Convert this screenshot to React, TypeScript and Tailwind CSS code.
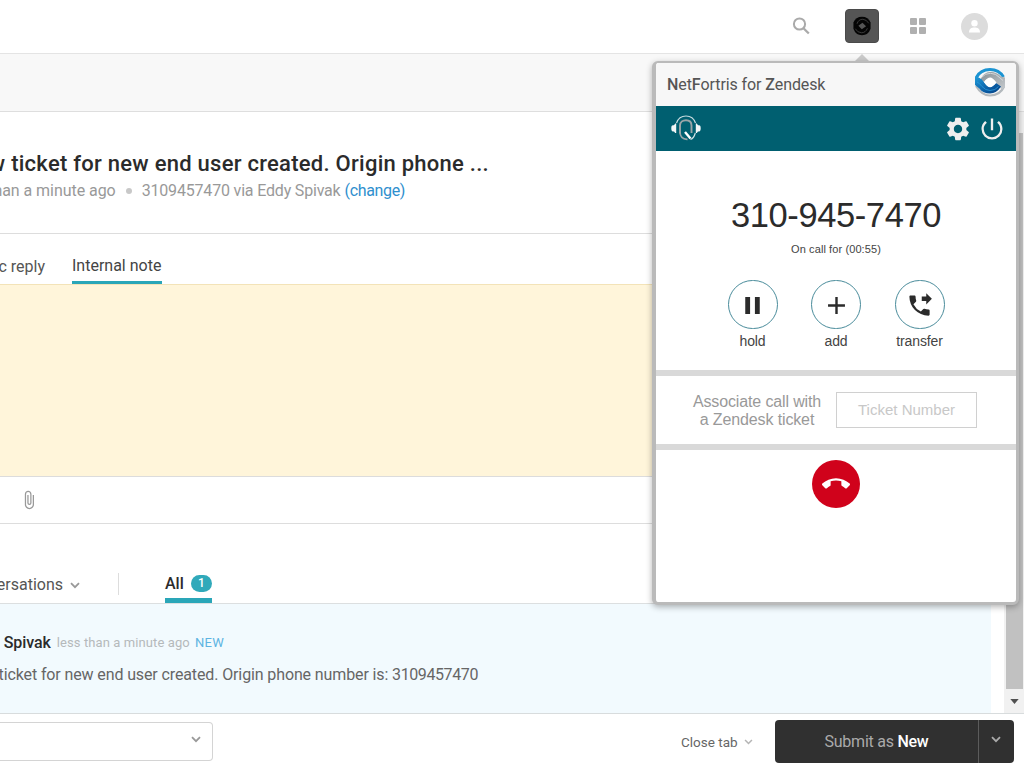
import React from "react";
import {
  MdAdd,
  MdAttachFile,
  MdCallEnd,
  MdPause,
  MdPhoneForwarded,
  MdPowerSettingsNew,
  MdSettings,
} from "react-icons/md";

function Chevron({ className }: { className: string }) {
  return (
    <svg viewBox="0 0 10 7" className={className} fill="none" stroke="currentColor" strokeWidth="1.8">
      <path d="M1 1.2 L5 5.2 L9 1.2" />
    </svg>
  );
}

function RingLogo() {
  return (
    <svg viewBox="0 0 30 29" className="h-[29px] w-[30px]" fill="none">
      <defs>
        <linearGradient id="blue" x1="0" y1="0" x2="1" y2="1">
          <stop offset="0" stopColor="#1f9ad8" />
          <stop offset="0.6" stopColor="#0a5ea6" />
          <stop offset="1" stopColor="#063f80" />
        </linearGradient>
        <linearGradient id="steel" x1="0" y1="0" x2="1" y2="1">
          <stop offset="0" stopColor="#858f95" />
          <stop offset="1" stopColor="#c6cacd" />
        </linearGradient>
      </defs>
      <path d="M1 18 C4 23 8 27.500 15 27.500 C22 27.500 27 23.500 29.300 18" stroke="#b3b9bd" strokeWidth="2.200" />
      <path d="M28.500 9 C25.500 4 21 1.500 15 1.500 C8.500 1.500 3.500 5 1 10" stroke="#1c94d2" strokeWidth="3" />
      <path d="M5.500 11.500 Q8.500 4 15.500 4 Q22 4 26 8.500 L30 9.500 V19 L27 21.500 Q24 20 21.500 15.500 Q18.500 10.300 15.500 10 Q12 10 9.500 14 Z" fill="url(#steel)" />
      <path d="M26 18.500 Q21.500 25.500 15 25.500 Q8 25.500 4.300 20.500 L0 17 V9 Q5 8.500 8.500 13.500 Q12 19 15 19 Q17.500 18.800 21 15 Z" fill="url(#blue)" />
      <path d="M2 14 Q4.500 15 7 18.500 Q10.500 22.500 15 22.500 Q20.500 22.500 23.500 18.500" stroke="#2a9bdc" strokeWidth="0.800" />
      <path d="M7 9 Q10 5.300 15.500 5.300 Q21 5.300 24.500 9.500 L28 12.500" stroke="#d9dde0" strokeWidth="0.900" />
      <path d="M15.500 9.600 Q17 9.600 21.500 14.500 Q17.500 19 15 19.300 Q13 19.300 9 14 Q12 9.800 15.500 9.600 Z" fill="#fff" />
    </svg>
  );
}

function DarkRingLogo() {
  return (
    <svg viewBox="0 0 20 22" className="h-[20px] w-[18px]" fill="none">
      <path d="M10 0.800 Q17 0.800 19.500 7 V14 Q17 21.200 10 21.200 Q3 21.200 0.500 14 V7 Q3 0.800 10 0.800Z" fill="#050505" />
      <path d="M10.500 7.500 L14.500 11.200 L9.800 14.500 L6 10.800Z" fill="#555" />
      <path d="M4.500 8.500 Q6 3.500 11 3.500 Q15 3.800 17.500 8" stroke="#505050" strokeWidth="0.800" />
      <path d="M2.500 14 Q5 18.500 9.500 18.500 Q14 18.500 16 13.500" stroke="#505050" strokeWidth="0.800" />
    </svg>
  );
}

function HeadsetLogo() {
  return (
    <svg viewBox="0 0 30 26" className="h-[26px] w-[30px]" fill="none">
      <path d="M5.500 8 C7 3.500 10.500 1 15 1 C19.500 1 23 3.500 24.500 8" stroke="#c5dade" strokeWidth="1.200" />
      <path d="M24.300 18 C23.500 21 22 23.500 19.500 24.500" stroke="#cfe0e3" strokeWidth="1.200" />
      <path d="M9 18.500 V10.500 C9 7 12 5.200 15 5.200 C18 5.200 20.500 7 20.500 10.500 V18" stroke="#9aa5a8" strokeWidth="1.900" />
      <path d="M9 17 C9 21.500 11.500 24.500 16.500 24.300" stroke="#9aa5a8" strokeWidth="1.700" />
      <path d="M14 17 L19.500 23.500" stroke="#fff" strokeWidth="2.400" />
      <path d="M5.200 8.500 V18 H4.200 L3 16.500 H2 C0.700 16.500 0.300 15 0.300 13.300 C0.300 11.500 0.700 10.300 2 10.300 H3 L4.200 8.500Z" fill="#f2f6f7" />
      <path d="M24.800 8.500 V18 H25.800 L27 16.500 H28 C29.300 16.500 29.700 15 29.700 13.300 C29.700 11.500 29.300 10.300 28 10.300 H27 L25.800 8.500Z" fill="#f2f6f7" />
    </svg>
  );
}

function CallAction({ label, children }: { label: string; children: React.ReactNode }) {
  return (
    <div className="flex w-[83.5px] flex-col items-center">
      <div className="flex h-[49px] w-[50px] items-center justify-center rounded-full border-[1.5px] border-[#4a8c9b] pt-px text-[#2b2b2b]">
        {children}
      </div>
      <span className="mt-[3px] text-[14px] leading-[18px] tracking-[-0.1px] text-[#444]">{label}</span>
    </div>
  );
}

function PhonePanel() {
  return (
    <div className="absolute left-[652px] top-[61px] flex h-[544px] w-[367px] flex-col overflow-hidden rounded-[6px] border-3 border-l-4 border-t-2 border-[#bababa] bg-white font-['Liberation_Sans',sans-serif] shadow-[0_2px_6px_rgba(0,0,0,0.3)]">
      <div className="flex h-[43px] shrink-0 items-center justify-between bg-[#f7f7f7] pl-[11px] pr-[11px]">
        <span className="mt-px whitespace-nowrap font-['Roboto',sans-serif] text-[16px] tracking-[-0.1px] text-[#555]">
          <span className="font-medium">N</span>et<span className="font-medium">F</span>ortris for <span className="font-medium">Z</span>endesk
        </span>
        <div className="-mt-[4px]"><RingLogo /></div>
      </div>
      <div className="flex h-[45px] shrink-0 items-center bg-[#005f70] pl-[15px] pr-[10px] text-[#eee]">
        <div className="mb-[2px] flex-1"><HeadsetLogo /></div>
        <MdSettings className="size-[28px]" />
        <MdPowerSettingsNew className="ml-[6px] size-[28px]" />
      </div>
      <div className="flex h-[219px] shrink-0 flex-col items-center">
        <div className="mt-[43px] whitespace-nowrap text-[34.5px] leading-[42px] tracking-[-0.4px] text-[#2b2b2b]">310-945-7470</div>
        <div className="mt-[6px] whitespace-nowrap text-[11px] leading-[14px] tracking-[0.1px] text-[#444]">On call for (00:55)</div>
        <div className="mt-[24px] flex">
          <CallAction label="hold"><MdPause className="size-[29px]" /></CallAction>
          <CallAction label="add"><MdAdd className="size-[29px]" /></CallAction>
          <CallAction label="transfer"><MdPhoneForwarded className="size-[27px]" /></CallAction>
        </div>
      </div>
      <div className="flex h-[80px] shrink-0 items-center border-y-[6px] border-[#d9d9d9] pl-[36px]">
        <p className="w-[130px] whitespace-nowrap pt-px text-center text-[16px] leading-[18px] tracking-[-0.13px] text-[#999]">
          Associate call with<br />a Zendesk ticket
        </p>
        <div className="ml-[14px] flex h-[36px] w-[141px] items-center justify-center border border-[#d0d0d0] pt-px text-[15px] text-[#c8c8c8]">
          Ticket Number
        </div>
      </div>
      <div className="flex justify-center pt-[10px]">
        <div className="flex size-[48px] items-center justify-center rounded-full bg-[#d0021b] text-white">
          <MdCallEnd className="size-[28px]" />
        </div>
      </div>
    </div>
  );
}

export default function App() {
  return (
    <div className="relative flex h-[768px] w-[1024px] flex-col overflow-hidden bg-white font-['Roboto',sans-serif] text-[#555]">
      <header className="flex h-[54px] shrink-0 items-center justify-end border-b border-[#e4e4e4] pb-px pr-[36px]">
        <svg viewBox="0 0 18 18" className="mr-[35px] size-[18px]" fill="none" stroke="#aaa" strokeWidth="2">
          <circle cx="7.500" cy="7" r="5.600" />
          <path d="M11.500 11.200 L16.800 16.500" strokeWidth="2.300" />
        </svg>
        <div className="mr-[31px] flex size-[34px] items-center justify-center rounded-[4px] border border-[#4a4a4a] bg-[#555]">
          <DarkRingLogo />
        </div>
        <div className="mr-[35px] grid grid-cols-2 gap-[2px]">
          <i className="size-[7px] rounded-[1px] bg-[#b0b0b0]" />
          <i className="size-[7px] rounded-[1px] bg-[#b0b0b0]" />
          <i className="size-[7px] rounded-[1px] bg-[#b0b0b0]" />
          <i className="size-[7px] rounded-[1px] bg-[#b0b0b0]" />
        </div>
        <svg viewBox="0 0 27 27" className="size-[27px]">
          <circle cx="13.500" cy="13.500" r="13.500" fill="#dcdcdc" />
          <circle cx="13.500" cy="10.200" r="3.200" fill="#fff" />
          <path d="M8 19.500 C8 15.500 10.500 14.500 13.500 14.500 C16.500 14.500 19 15.500 19 19.500Z" fill="#fff" />
        </svg>
      </header>
      <div className="h-[58px] shrink-0 border-b border-[#dedede] bg-[#f8f8f8]" />

      <div className="flex h-[601px] shrink-0">
        <main className="flex w-[991px] flex-col">
          <section className="h-[122px] shrink-0 border-b border-[#ddd] pt-[39px]">
            <div className="flex w-[489px] justify-end">
              <h1 className="whitespace-nowrap text-[22px] font-medium leading-[26px] tracking-[0.26px] text-[#2b2b2b]">
                New ticket for new end user created. Origin phone ...
              </h1>
            </div>
            <div className="mt-[4px] flex w-[405px] items-center justify-end whitespace-nowrap text-[16px] leading-[20px] text-[#999]">
              <span className="tracking-[-0.05px]">less than a minute ago</span>
              <i className="mx-[10px] size-[6px] shrink-0 rounded-full bg-[#c8c8c8]" />
              <span className="tracking-[-0.18px]">3109457470 via Eddy Spivak</span>
              <span className="ml-[4px] tracking-[-0.35px] text-[#2f8fce]">(change)</span>
            </div>
          </section>
          <nav className="flex h-[50px] shrink-0 items-end whitespace-nowrap text-[16px]">
            <div className="flex h-[50px] w-[45px] justify-end pt-[23px] leading-[20px]">Public reply</div>
            <div className="ml-[27px] h-[50px] w-[90px] border-b-3 border-[#2aa6b8] pt-[22px] leading-[20px] text-[#444]">Internal note</div>
          </nav>
          <div className="h-[193px] shrink-0 border-b border-t border-b-[#dcdcdc] border-t-[#f3e3b8] bg-[#fff5da]" />
          <div className="flex h-[47px] shrink-0 items-center border-b border-[#ddd] pl-[19px]">
            <MdAttachFile className="size-[20px] text-[#999]" />
          </div>
          <nav className="flex h-[80px] shrink-0 items-end whitespace-nowrap border-b border-[#dcdfe0] text-[16px]">
            <div className="flex h-[28px] w-[63px] justify-end leading-[20px]">All conversations</div>
            <Chevron className="mb-[14px] ml-[7px] h-[7px] w-[10px] text-[#999]" />
            <div className="mb-[8px] ml-[38px] h-[22px] w-px bg-[#ddd]" />
            <div className="ml-[46px] flex h-[29px] w-[47px] justify-between border-b-[5px] border-[#2aa6b8]">
              <span className="font-medium leading-[20px] text-[#2b2b2b]">All</span>
              <span className="mt-px h-[17px] w-[21px] rounded-full bg-[#30a9ba] text-center text-[12px] font-medium leading-[17px] text-white">1</span>
            </div>
          </nav>
          <section className="flex-1 bg-[#f2fafe] pt-[29px]">
            <div className="flex w-[224px] justify-end whitespace-nowrap leading-[20px]">
              <span className="text-[16px] font-medium tracking-[-0.1px] text-[#2b2b2b] [word-spacing:2px]">Eddy Spivak</span>
              <span className="ml-[6px] text-[13px] tracking-[0.1px] text-[#b5b9bb]">less than a minute ago</span>
              <span className="ml-[5px] text-[13px] tracking-[0.3px] text-[#5eb4e2]">NEW</span>
            </div>
            <div className="mt-[12px] flex w-[478px] justify-end whitespace-pre text-[16px] leading-[20px] tracking-[-0.12px] text-[#666]">
              <span>New ticket for new end user created. Origin phone number is: </span>
              <span className="tracking-[-0.4px]">3109457470</span>
            </div>
          </section>
        </main>
        <div className="ml-[13px] flex w-[20px] flex-col items-center bg-[#f1f1f1] pt-[21px]">
          <div className="h-[556px] w-[17px] bg-[#c1c1c1]" />
          <svg viewBox="0 0 10 6" className="mt-[10px] h-[5px] w-[9px]">
            <path d="M0 0 H10 L5 6Z" fill="#505050" />
          </svg>
        </div>
      </div>

      <footer className="flex flex-1 border-t border-[#d8dcdd] pt-[6px]">
        <div className="mt-[2px] flex h-[39px] w-[213px] items-center justify-end rounded-r-[4px] border border-l-0 border-[#d4d4d4] pr-[11px]">
          <Chevron className="mb-[4px] h-[7px] w-[10px] text-[#999]" />
        </div>
        <div className="ml-[468px] flex h-[44px] w-[94px] items-center whitespace-nowrap text-[13.5px]">
          <span className="w-[57px] text-[#666]">Close tab</span>
          <Chevron className="ml-[6px] h-[6px] w-[9px] text-[#b5b5b5]" />
        </div>
        <div className="flex h-[43px] w-[239px] rounded-[4px] bg-[#303030]">
          <div className="flex flex-1 items-center justify-center whitespace-pre text-[16px] tracking-[-0.25px] text-[#aaa]">
            Submit as <span className="font-medium text-white">New</span>
          </div>
          <div className="flex w-[36px] items-center justify-center border-l border-[#5c5c5c]">
            <Chevron className="mb-[4px] mr-[2px] h-[7px] w-[10px] text-[#aaa]" />
          </div>
        </div>
      </footer>

      <svg viewBox="0 0 14 7" className="absolute left-[855px] top-[54px] h-[7px] w-[14px]">
        <path d="M7 0 L14 7 H0Z" fill="#cacaca" />
      </svg>
      <PhonePanel />
    </div>
  );
}
